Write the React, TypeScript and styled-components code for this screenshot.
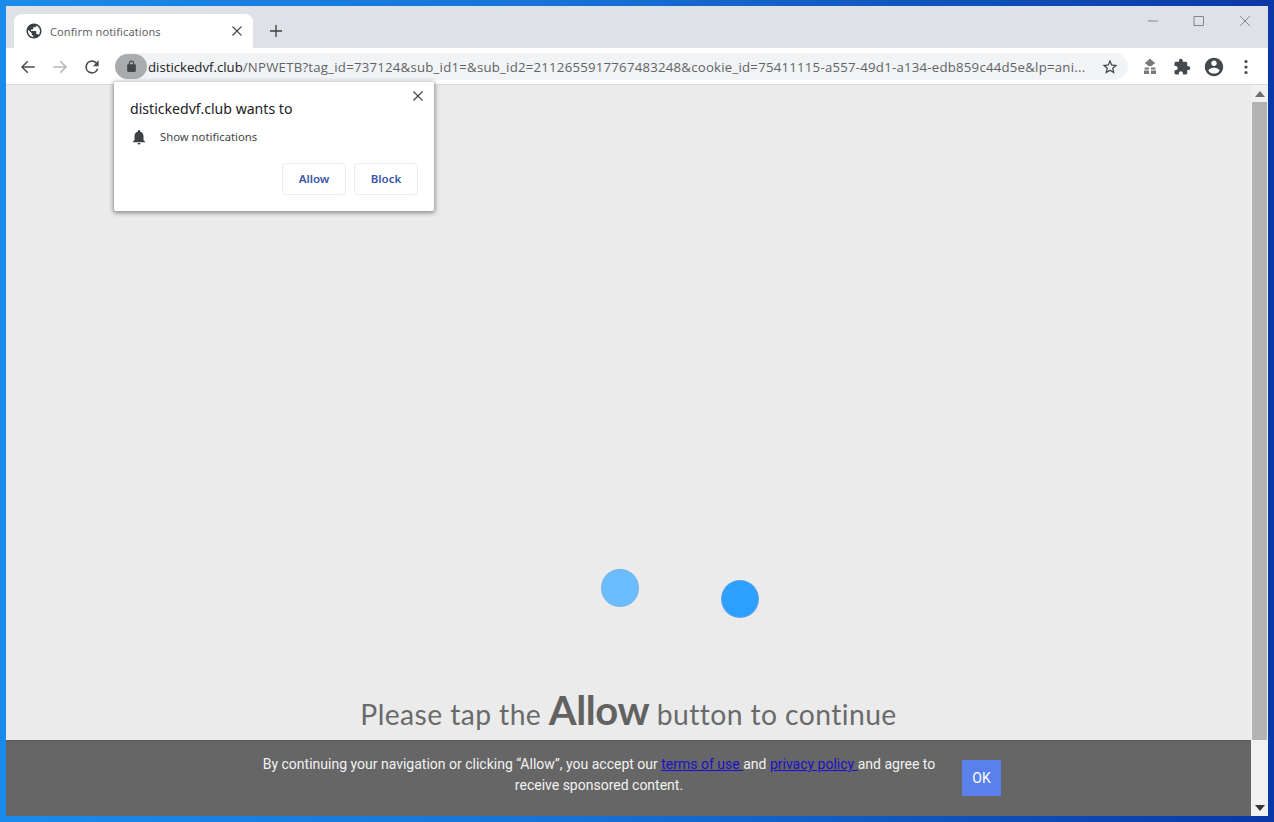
import React from "react";
import styled, { createGlobalStyle } from "styled-components";

const Global = createGlobalStyle`
  html, body { margin: 0; padding: 0; height: 100%; overflow: hidden; }
  * { box-sizing: border-box; }
  body { font-family: "Noto Sans", "Open Sans", sans-serif; }
`;

const Desktop = styled.div`
  width: 1274px; height: 822px; padding: 6px 6px 6px 6px; position: relative;
  background: linear-gradient(90deg, #1a8bec 0%, #1672d6 45%, #0f52bc 75%, #0a38a6 100%);
`;
const Window = styled.div`
  width: 100%; height: 100%; display: flex; flex-direction: column; position: relative; background: #ebebeb;
`;
const TabStrip = styled.div`
  height: 42px; background: #dee1e6; display: flex; align-items: flex-end; padding-left: 8px; flex: none;
`;
const Tab = styled.div`
  width: 239px; height: 34px; background: #fff; border-radius: 8px 8px 0 0;
  display: flex; align-items: center; padding: 0 9px 0 11px; color: #5f6368; font-size: 11px;
`;
const TabIcon = styled.div`
  display: flex; color: #3c4043;
`;
const TabTitle = styled.span`
  margin-left: 7px; flex: 1; white-space: nowrap; letter-spacing: 0.1px;
`;
const TabClose = styled.div`
  display: flex; color: #3c4043;
`;
const NewTab = styled.div`
  width: 16px; height: 16px; margin: 0 0 9px 15px; display: flex; color: #3c4043;
`;
const WindowControls = styled.div`
  margin-left: auto; align-self: flex-start; display: flex; color: #6b6e72;
`;
const WindowButton = styled.div`
  width: 46px; height: 29px; display: flex; align-items: center; justify-content: center;
`;
const Toolbar = styled.div`
  height: 37px; flex: none; background: #fff; border-bottom: 1px solid #d8d9db;
  display: flex; align-items: flex-start; padding: 5px 0 0 11px;
`;
const NavButton = styled.div<{ $muted?: boolean }>`
  width: 21px; height: 27px; margin-right: 11px; display: flex; align-items: center; justify-content: center;
  color: ${(p) => (p.$muted ? "#b4b6b9" : "#494c50")};
`;
const Omnibox = styled.div`
  width: 1013px; height: 27px; margin-left: 2px; border-radius: 14px; background: #f1f3f4;
  display: flex; align-items: center; padding-right: 9px;
`;
const LockPill = styled.div`
  width: 32px; height: 25px; border-radius: 13px; background: #a9abad; color: #45474a; flex: none;
  display: flex; align-items: center; justify-content: center;
`;
const Url = styled.div`
  flex: 1; min-width: 0; margin-left: 1px; font-size: 13.2px; color: #5f6368; white-space: nowrap; overflow: hidden;
  letter-spacing: 0.24px; font-family: "Open Sans", "Noto Sans", sans-serif;
`;
const Host = styled.span`
  color: #202124; letter-spacing: 0;
`;
const StarSlot = styled.div`
  margin-left: 8px; width: 18px; height: 18px; display: flex; color: #3c4043; flex: none;
`;
const ActionRow = styled.div`
  display: flex; align-items: center; height: 27px; margin-left: 6px;
`;
const Action = styled.div<{ $w?: number }>`
  width: ${(p) => p.$w ?? 32}px; display: flex; justify-content: center; color: #45484c;
`;
const Content = styled.div`
  flex: 1; min-height: 0; display: flex;
`;
const Page = styled.main`
  flex: 1; min-width: 0; display: flex; flex-direction: column; justify-content: flex-end; background: #ebebeb;
`;
const Dots = styled.div`
  display: flex; justify-content: center; gap: 82px; margin-left: 103px; height: 50px;
`;
const Dot = styled.div<{ $color: string; $drop: number }>`
  width: 38px; height: 38px; border-radius: 50%; background: ${(p) => p.$color};
  margin-top: ${(p) => p.$drop}px; border: 1px solid rgba(120, 170, 215, 0.55);
`;
const Headline = styled.h1`
  margin: 65px 0 0; height: 57px; padding-top: 2px; text-align: center; font-weight: 400; font-size: 28.3px; line-height: 50px;
  color: #6a6a6a; font-family: "Lato", "Open Sans", sans-serif; letter-spacing: 0.4px; white-space: nowrap;
`;
const Strong = styled.b`
  font-size: 40px; font-weight: 700; color: #626262; letter-spacing: -0.4px;
`;
const CookieBar = styled.div`
  height: 76px; flex: none; background: #666; border-top: 1px solid #5a5a5a;
  display: flex; justify-content: center; align-items: flex-start; padding: 13px 0 0 3px;
  color: #fff; font: 14px/21px Roboto, sans-serif;
`;
const CookieText = styled.p`
  width: 680px; margin: 0; text-align: center; color: #f2f2f2;
`;
const Link = styled.a`
  color: #1a10c8; text-decoration: underline;
`;
const OkButton = styled.button`
  width: 39px; height: 36px; margin: 6px 0 0 23px; border: 0; padding: 0; background: #5a80ec; color: #fff;
  font: 14px Roboto, sans-serif;
`;
const Scrollbar = styled.div`
  width: 17px; flex: none; background: #f1f1f1; display: flex; flex-direction: column; align-items: center; color: #3f3f3f;
`;
const ArrowSlot = styled.div`
  height: 17px; flex: none; display: flex; align-items: center; justify-content: center;
`;
const Thumb = styled.div`
  width: 15px; height: 638px; flex: none; background: #b3b3b3;
`;
const Spacer = styled.div`
  flex: 1;
`;
const Popup = styled.section`
  position: absolute; left: 108px; top: 76px; width: 320px; height: 129px; background: #fff; z-index: 2;
  border-radius: 2px; box-shadow: 0 1px 4px 1px rgba(60, 64, 67, 0.55); padding: 17px 16px 0;
  color: #202124;
`;
const PopupClose = styled.div`
  position: absolute; top: 7px; right: 9px; width: 14px; height: 14px; display: flex; color: #3c4043;
`;
const PopupTitle = styled.div`
  font-size: 14.1px; line-height: 20px; white-space: nowrap;
`;
const PermissionRow = styled.div`
  display: flex; align-items: center; margin-top: 8px; font-size: 11.3px; line-height: 20px; color: #444649;
`;
const BellSlot = styled.div`
  width: 18px; height: 18px; display: flex; color: #3f4245; margin-right: 12px; flex: none;
`;
const PopupActions = styled.div`
  display: flex; justify-content: flex-end; gap: 8px; margin-top: 16px;
`;
const PopupButton = styled.button`
  width: 64px; height: 32px; background: #fff; border: 1px solid #eceded; border-radius: 4px; padding: 0 0 2px;
  color: #3b55a8; font: 600 11.5px "Noto Sans", sans-serif;
`;

const Mat = ({ d, size = 18 }: { d: string; size?: number }) => (
  <svg width={size} height={size} viewBox="0 0 24 24" fill="currentColor"><path d={d} /></svg>
);
const Line = ({ d, size = 18, w = 2 }: { d: string; size?: number; w?: number }) => (
  <svg width={size} height={size} viewBox="0 0 24 24" fill="none" stroke="currentColor" strokeWidth={w} strokeLinecap="square"><path d={d} /></svg>
);

const GLOBE = "M12 2C6.48 2 2 6.48 2 12s4.48 10 10 10 10-4.48 10-10S17.52 2 12 2zm-1 17.93c-3.95-.49-7-3.85-7-7.93 0-.62.08-1.21.21-1.79L9 15v1c0 1.1.9 2 2 2v1.93zm6.9-2.54c-.26-.81-1-1.39-1.9-1.39h-1v-3c0-.55-.45-1-1-1H8v-2h2c.55 0 1-.45 1-1V7h2c1.1 0 2-.9 2-2v-.41c2.93 1.19 5 4.06 5 7.41 0 2.08-.8 3.97-2.1 5.39z";
const BELL = "M12 22c1.1 0 2-.9 2-2h-4c0 1.1.9 2 2 2zm6-6v-5c0-3.07-1.63-5.64-4.5-6.32V4c0-.83-.67-1.5-1.5-1.5s-1.5.67-1.5 1.5v.68C7.64 5.36 6 7.92 6 11v5l-2 2v1h16v-1l-2-2z";
const LOCK = "M18 8h-1V6c0-2.76-2.24-5-5-5S7 3.24 7 6v2H6c-1.1 0-2 .9-2 2v10c0 1.1.9 2 2 2h12c1.1 0 2-.9 2-2V10c0-1.1-.9-2-2-2zM9 6c0-1.66 1.34-3 3-3s3 1.34 3 3v2H9V6z";
const PUZZLE = "M20.5 11H19V7c0-1.1-.9-2-2-2h-4V3.5C13 2.12 11.88 1 10.5 1S8 2.12 8 3.5V5H4c-1.1 0-1.99.9-1.99 2v3.8H3.5c1.49 0 2.7 1.21 2.7 2.7s-1.21 2.7-2.7 2.7H2V20c0 1.1.9 2 2 2h3.8v-1.5c0-1.49 1.21-2.7 2.7-2.7 1.49 0 2.7 1.21 2.7 2.7V22H17c1.1 0 2-.9 2-2v-4h1.5c1.38 0 2.5-1.12 2.5-2.5S21.88 11 20.5 11z";
const ACCOUNT = "M12 2C6.48 2 2 6.48 2 12s4.48 10 10 10 10-4.48 10-10S17.52 2 12 2zm0 3c1.66 0 3 1.34 3 3s-1.34 3-3 3-3-1.34-3-3 1.34-3 3-3zm0 14.2c-2.5 0-4.71-1.28-6-3.22.03-1.99 4-3.08 6-3.08 1.99 0 5.97 1.09 6 3.08-1.29 1.94-3.5 3.22-6 3.22z";
const STAR = "M22 9.24l-7.19-.62L12 2 9.19 8.63 2 9.24l5.46 4.73L5.82 21 12 17.27 18.18 21l-1.63-7.03L22 9.24zM12 15.4l-3.76 2.27 1-4.28-3.32-2.88 4.38-.38L12 6.1l1.71 4.04 4.38.38-3.32 2.88 1 4.28L12 15.4z";
const CLOSE = "M5 5l14 14M19 5L5 19";
const BACK = "M20 12H5M11 5l-7 7 7 7";
const FORWARD = "M4 12h15M13 5l7 7-7 7";
const RELOAD = "M17.65 6.35A7.96 7.96 0 0 0 12 4a8 8 0 1 0 7.73 10h-2.08A6 6 0 1 1 12 6c1.66 0 3.14.69 4.22 1.78L13 11h7V4l-2.35 2.35z";

const ExtensionMark = () => (
  <svg width="18" height="18" viewBox="0 0 18 18" fill="#77797c">
    <circle cx="9" cy="5" r="3.2" />
    <circle cx="9" cy="1.9" r="1.1" />
    <circle cx="5.4" cy="5" r="1.2" />
    <circle cx="12.6" cy="5" r="1.2" />
    <path d="M3.6 9.5h4.4v2H3.6zM10 9.5h4.4v2H10zM3 12.5h5v3.5H3zM10 12.5h5v3.5h-5z" />
  </svg>
);
const Kebab = () => (
  <svg width="18" height="18" viewBox="0 0 18 18" fill="currentColor">
    <circle cx="9" cy="3.5" r="1.6" />
    <circle cx="9" cy="9" r="1.6" />
    <circle cx="9" cy="14.5" r="1.6" />
  </svg>
);

export default function App() {
  return (
    <Desktop>
      <Global />
      <Window>
        <TabStrip>
          <Tab>
            <TabIcon><Mat d={GLOBE} size={18} /></TabIcon>
            <TabTitle>Confirm notifications</TabTitle>
            <TabClose><Line d={CLOSE} size={14} /></TabClose>
          </Tab>
          <NewTab><Line d="M12 4v16M4 12h16" size={16} /></NewTab>
          <WindowControls>
            <WindowButton><Line d="M3 12h18" size={12} w={1.6} /></WindowButton>
            <WindowButton><Line d="M3 3h18v18H3z" size={12} w={1.6} /></WindowButton>
            <WindowButton><Line d="M3 3l18 18M21 3L3 21" size={12} w={1.6} /></WindowButton>
          </WindowControls>
        </TabStrip>
        <Toolbar>
          <NavButton><Line d={BACK} /></NavButton>
          <NavButton $muted><Line d={FORWARD} /></NavButton>
          <NavButton><Mat d={RELOAD} size={20} /></NavButton>
          <Omnibox>
            <LockPill><Mat d={LOCK} size={13} /></LockPill>
            <Url>
              <Host>distickedvf.club</Host>/NPWETB?tag_id=737124&sub_id1=&sub_id2=2112655917767483248&cookie_id=75411115-a557-49d1-a134-edb859c44d5e&lp=ani...
            </Url>
            <StarSlot><Mat d={STAR} /></StarSlot>
          </Omnibox>
          <ActionRow>
            <Action><ExtensionMark /></Action>
            <Action><Mat d={PUZZLE} /></Action>
            <Action><Mat d={ACCOUNT} size={22} /></Action>
            <Action><Kebab /></Action>
          </ActionRow>
        </Toolbar>
        <Content>
          <Page>
            <Dots>
              <Dot $color="#6bbcfd" $drop={1} />
              <Dot $color="#2c9fff" $drop={12} />
            </Dots>
            <Headline>
              Please tap the <Strong>Allow</Strong> button to continue
            </Headline>
            <CookieBar>
              <CookieText>
                By continuing your navigation or clicking “Allow”, you accept our <Link href="#">terms of use </Link>and <Link href="#">privacy policy </Link>and agree to receive sponsored content.
              </CookieText>
              <OkButton>OK</OkButton>
            </CookieBar>
          </Page>
          <Scrollbar>
            <ArrowSlot><svg width="10" height="6" viewBox="0 0 10 6" fill="#6f6f6f"><path d="M5 0l5 6H0z" /></svg></ArrowSlot>
            <Thumb />
            <Spacer />
            <ArrowSlot><svg width="10" height="6" viewBox="0 0 10 6" fill="#333"><path d="M0 0h10L5 6z" /></svg></ArrowSlot>
          </Scrollbar>
        </Content>
        <Popup>
          <PopupClose><Line d={CLOSE} size={14} w={2.2} /></PopupClose>
          <PopupTitle>distickedvf.club wants to</PopupTitle>
          <PermissionRow>
            <BellSlot><Mat d={BELL} /></BellSlot>
            Show notifications
          </PermissionRow>
          <PopupActions>
            <PopupButton>Allow</PopupButton>
            <PopupButton>Block</PopupButton>
          </PopupActions>
        </Popup>
      </Window>
    </Desktop>
  );
}
